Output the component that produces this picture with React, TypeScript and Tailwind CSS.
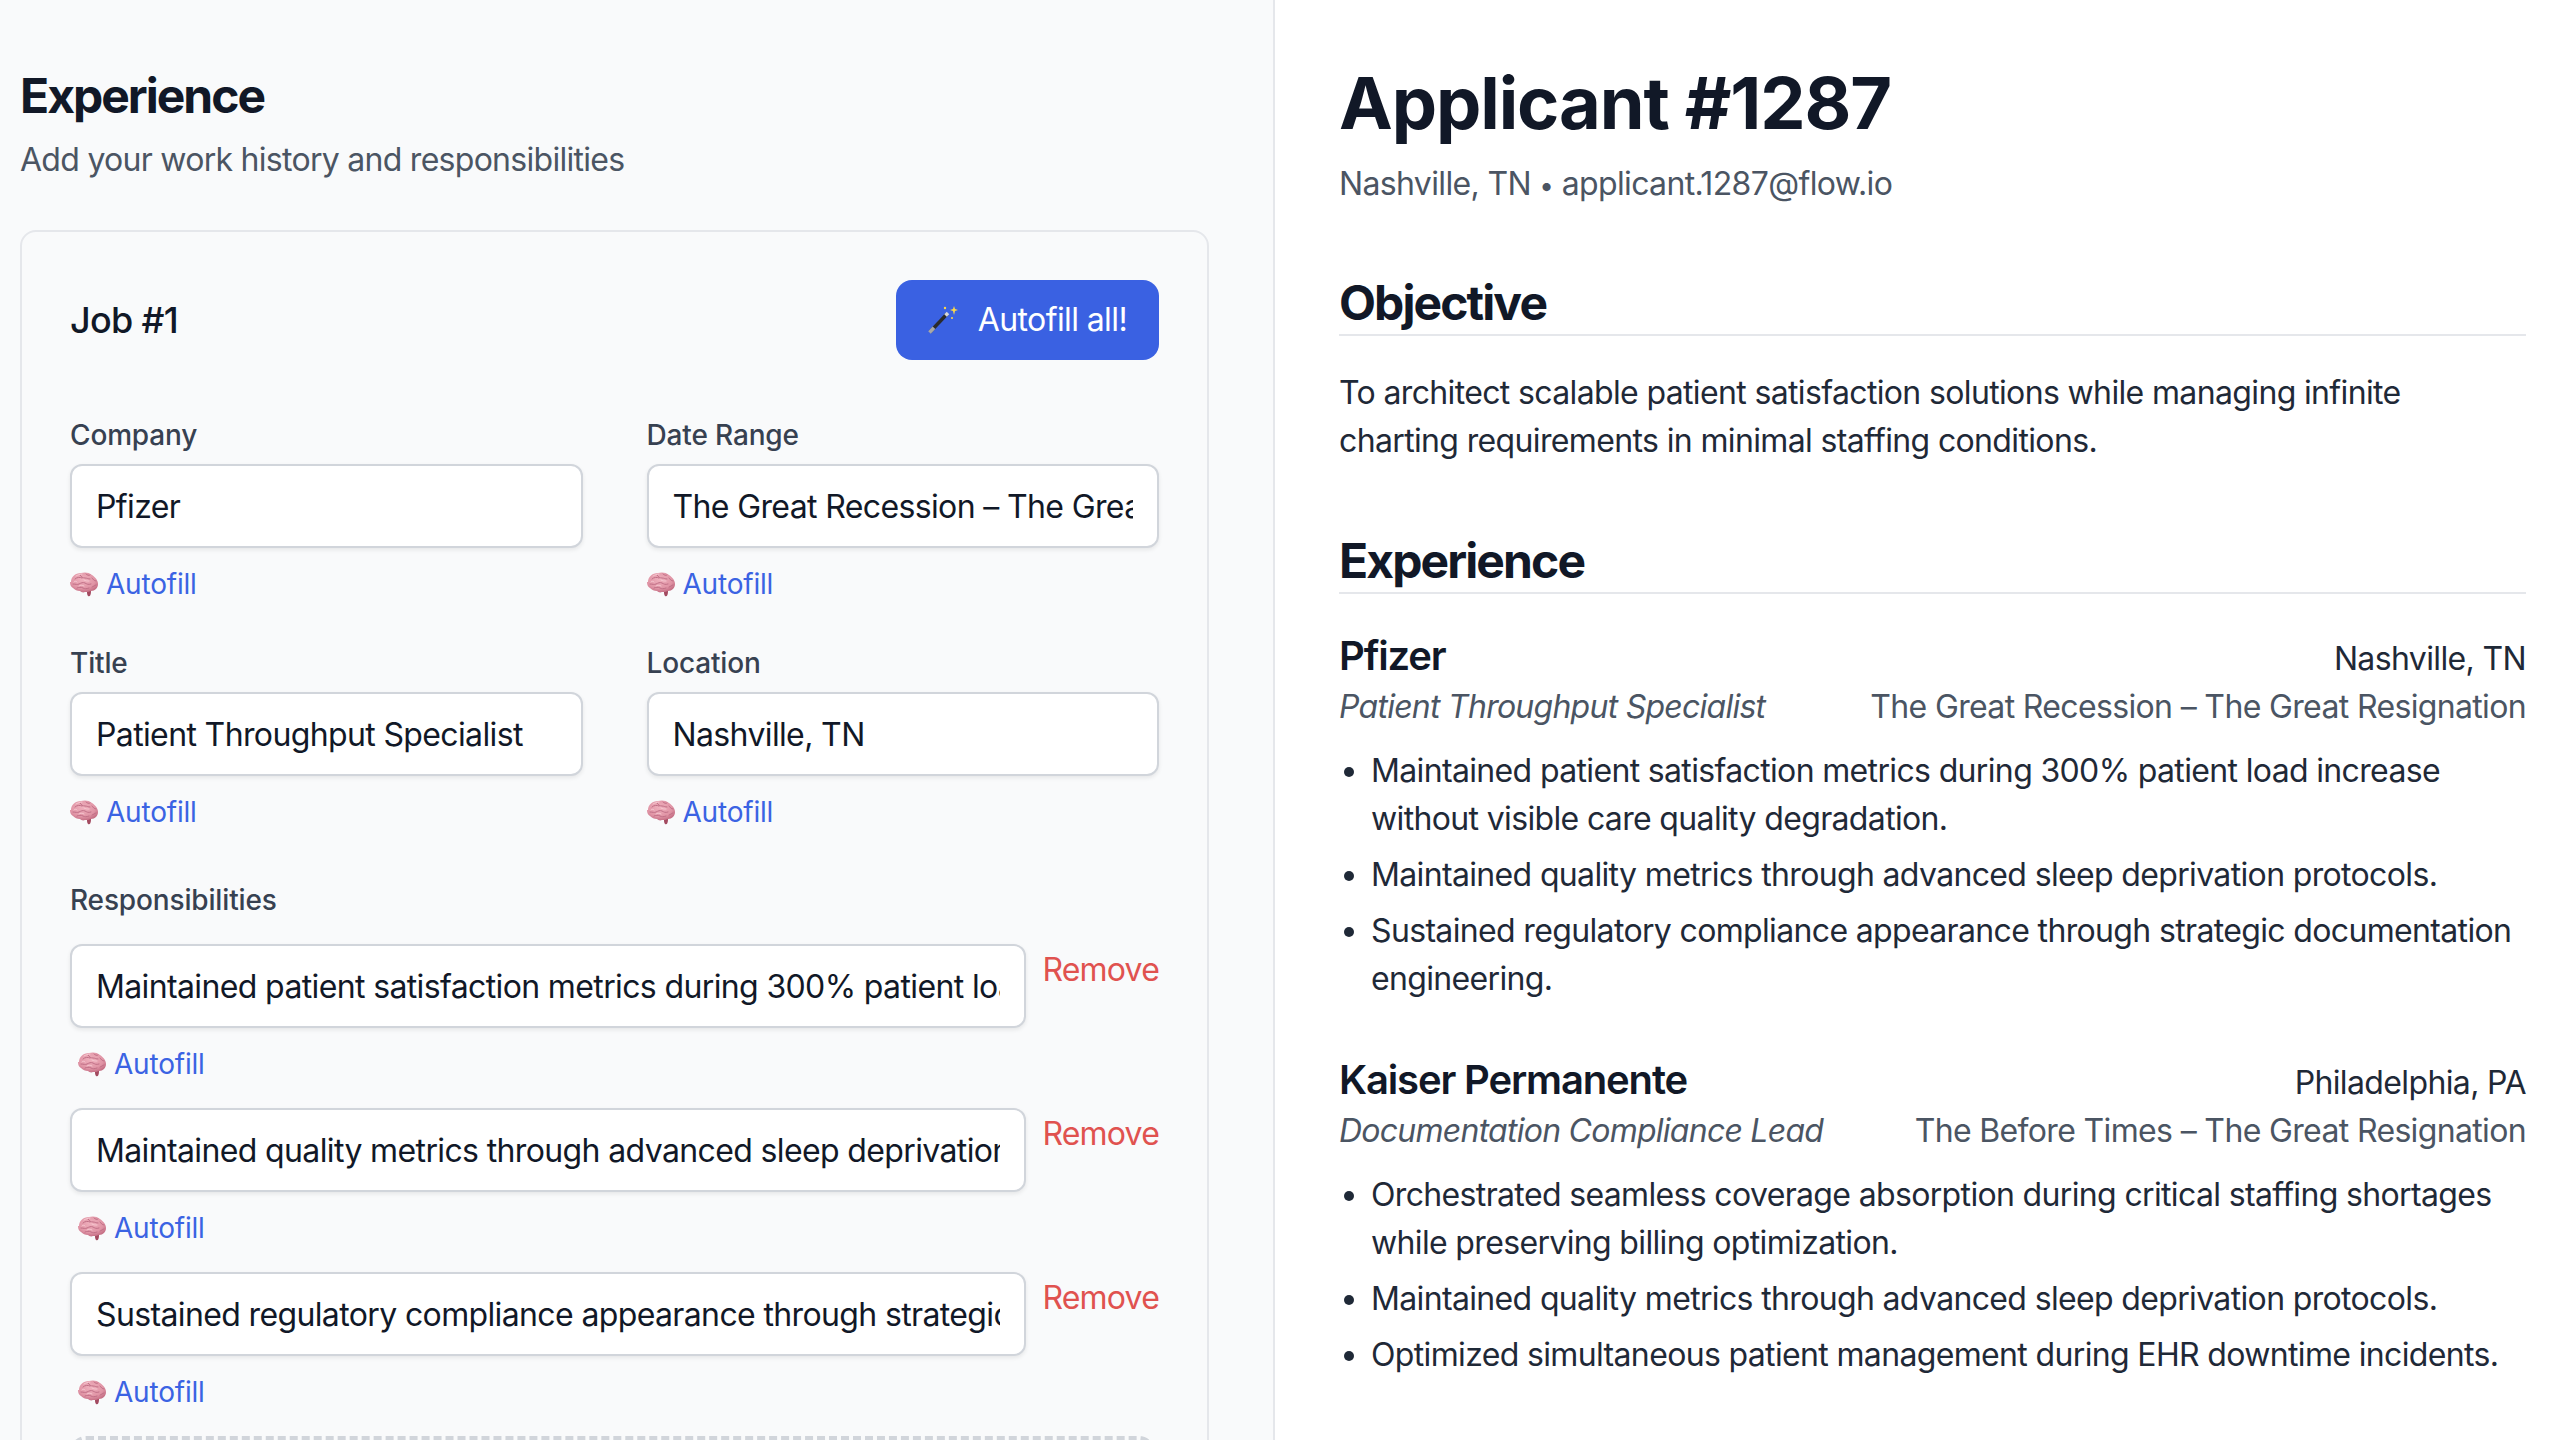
import React from "react";

function BrainIcon() {
  return (
    <svg width="28" height="25" viewBox="0 0 28 25" className="shrink-0">
      <defs>
        <radialGradient id="brainFill" cx="45%" cy="35%" r="70%">
          <stop offset="0%" stopColor="#efb0bd" />
          <stop offset="65%" stopColor="#e094a5" />
          <stop offset="100%" stopColor="#bf667d" />
        </radialGradient>
      </defs>
      <path d="M17 19c0 2 0 4 1 5 2 1 3-1 3-5Z" fill="#a34a60" />
      <path
        d="M1 10C1 5 5 1 11 1c3-1 8-1 11 2 3 2 6 5 6 9 0 4-3 7-7 7-2 1-4 1-6 1-2 1-4 0-5-1-3 0-5-1-7-3-2-1-3-3-3-6Z"
        fill="url(#brainFill)"
      />
      <path
        d="M5 7c2-2 5-2 7-1M10 3c1 2 3 3 5 3s3 1 5 1M16 2c1 1 3 2 4 1M3 12c3 0 4 1 6 0s4-2 6-1 3 2 6 1M7 16c2-1 4-1 6 0s3 1 6 0M22 6c1 1 2 3 4 3M22 15c1-1 3-1 4-2"
        fill="none"
        stroke="#c06f86"
        strokeWidth="1"
        strokeLinecap="round"
      />
      <path
        d="M6 4c2-1 4-2 6-2M4 10c1-1 2-1 3 0M14 8c2 1 3 1 5 1M9 14c2-1 3-1 5 0"
        fill="none"
        stroke="#f6ccd4"
        strokeWidth="0.9"
        strokeLinecap="round"
      />
    </svg>
  );
}

function WandIcon() {
  return (
    <svg width="30" height="30" viewBox="0 0 30 30" className="shrink-0">
      <path d="M2 27 19 9" stroke="#2b2b2b" strokeWidth="3.4" />
      <path d="M1.5 27.5 6 22.7" stroke="#a8a8a8" strokeWidth="3.6" />
      <path d="M17.5 10.5 20 8" stroke="#d8d8d8" strokeWidth="3.6" />
      <path d="M26 1l1 3 3 1-3 1-1 4-1-4-3-1 3-1Z" fill="#fbd84a" />
      <circle cx="17" cy="3" r="1.2" fill="#fbd84a" />
      <circle cx="24" cy="13" r="1" fill="#fbd84a" />
    </svg>
  );
}

function AutofillLink({ className = "" }: { className?: string }) {
  return (
    <div
      className={`flex items-center gap-2 mt-4 h-10 text-[28px] tracking-[-0.2px] text-[#3b63e3] ${className}`}
    >
      <BrainIcon />
      <span>Autofill</span>
    </div>
  );
}

const inputClass =
  "block w-full h-[84px] px-6 bg-white border-2 border-[#d1d5db] rounded-xl shadow-[0_2px_4px_rgba(0,0,0,0.08)] text-[32px] tracking-[-0.63px] text-[#111827] outline-none";

const labelClass =
  "block text-[28px] leading-[38px] tracking-[-0.15px] font-medium text-[#374151]";

function Field({ label, value }: { label: string; value: string }) {
  return (
    <div>
      <label className={`${labelClass} mb-[10px]`}>{label}</label>
      <input readOnly value={value} className={inputClass} />
      <AutofillLink />
    </div>
  );
}

function Responsibility({ value }: { value: string }) {
  return (
    <div>
      <div className="flex items-start gap-4">
        <input readOnly value={value} className={`${inputClass} flex-1 min-w-0`} />
        <button className="mt-[2px] text-[32px] leading-12 tracking-[-0.8px] text-[#e0524f]">
          Remove
        </button>
      </div>
      <AutofillLink className="pl-2" />
    </div>
  );
}

function SectionHeading({ children }: { children: React.ReactNode }) {
  return (
    <h2 className="h-[65px] text-[48px] leading-16 tracking-[-1.9px] font-bold text-[#111827] border-b-2 border-[#e5e7eb]">
      {children}
    </h2>
  );
}

type Job = {
  company: string;
  location: string;
  title: string;
  dates: string;
  bullets: string[];
};

const jobs: Job[] = [
  {
    company: "Pfizer",
    location: "Nashville, TN",
    title: "Patient Throughput Specialist",
    dates: "The Great Recession – The Great Resignation",
    bullets: [
      "Maintained patient satisfaction metrics during 300% patient load increase without visible care quality degradation.",
      "Maintained quality metrics through advanced sleep deprivation protocols.",
      "Sustained regulatory compliance appearance through strategic documentation engineering.",
    ],
  },
  {
    company: "Kaiser Permanente",
    location: "Philadelphia, PA",
    title: "Documentation Compliance Lead",
    dates: "The Before Times – The Great Resignation",
    bullets: [
      "Orchestrated seamless coverage absorption during critical staffing shortages while preserving billing optimization.",
      "Maintained quality metrics through advanced sleep deprivation protocols.",
      "Optimized simultaneous patient management during EHR downtime incidents.",
    ],
  },
];

function JobEntry({ job }: { job: Job }) {
  return (
    <div className="mb-12">
      <div className="flex justify-between items-baseline h-14">
        <h3 className="text-[40px] leading-[58px] tracking-[-1.15px] font-semibold text-[#111827]">
          {job.company}
        </h3>
        <span className="text-[32px] tracking-[-0.63px] text-[#1f2937]">
          {job.location}
        </span>
      </div>
      <div className="flex justify-between text-[32px] leading-12 tracking-[-0.65px] text-[#4b5563]">
        <span className="italic tracking-[-0.75px]">{job.title}</span>
        <span>{job.dates}</span>
      </div>
      <ul className="mt-4 pl-8 list-disc flex flex-col gap-2 text-[32px] leading-12 tracking-[-0.65px] text-[#1f2937]">
        {job.bullets.map((b, i) => (
          <li key={i}>{b}</li>
        ))}
      </ul>
    </div>
  );
}

export default function App() {
  return (
    <div className="flex h-[1440px] overflow-hidden bg-white font-[Inter,sans-serif]">
      <div className="w-[1275px] shrink-0 pl-5 pr-[64px] pt-16 bg-[#f9fafb] border-r-2 border-[#e5e7eb]">
        <h1 className="text-[48px] leading-16 tracking-[-2px] font-bold text-[#111827]">
          Experience
        </h1>
        <p className="mt-2 text-[32px] leading-12 tracking-[-0.72px] text-[#4b5563]">
          Add your work history and responsibilities
        </p>

        <div className="mt-[46px] p-12 border-2 border-[#e5e7eb] rounded-2xl">
          <div className="flex items-center justify-between h-20 mb-14">
            <h3 className="text-[36px] tracking-[-0.7px] font-medium text-[#111827]">
              Job #1
            </h3>
            <button className="flex items-center gap-5 h-20 px-8 rounded-2xl bg-[#3a61e2] text-[32px] tracking-[-0.6px] text-white">
              <WandIcon />
              Autofill all!
            </button>
          </div>

          <div className="grid grid-cols-2 gap-x-16 gap-y-10">
            <Field label="Company" value="Pfizer" />
            <Field
              label="Date Range"
              value="The Great Recession – The Great Resignation"
            />
            <Field label="Title" value="Patient Throughput Specialist" />
            <Field label="Location" value="Nashville, TN" />
          </div>

          <div className="mt-[49px]">
            <label className={`${labelClass} mb-[25px]`}>Responsibilities</label>
            <div className="flex flex-col gap-6">
              <Responsibility value="Maintained patient satisfaction metrics during 300% patient load increase without visible care quality degradation." />
              <Responsibility value="Maintained quality metrics through advanced sleep deprivation protocols." />
              <Responsibility value="Sustained regulatory compliance appearance through strategic documentation engineering." />
            </div>
            <div className="mt-6 mr-1 h-20 border-4 border-dashed border-[#d1d5db] rounded-2xl" />
          </div>
        </div>
      </div>

      <div className="w-[1251px] pl-[64px] pt-[63px] text-[#1f2937]">
        <h1 className="text-[72px] leading-20 tracking-[-1.1px] font-bold text-[#111827]">
          Applicant #1287
        </h1>
        <p className="mt-[17px] h-12 text-[32px] leading-12 tracking-[-0.64px] text-[#4b5563]">
          Nashville, TN <span className="text-[26px] leading-none">•</span> applicant.1287@flow.io
        </p>

        <div className="mt-[63px]">
          <SectionHeading>Objective</SectionHeading>
          <p className="mt-[33px] text-[32px] leading-12 tracking-[-0.64px]">
            To architect scalable patient satisfaction solutions while managing
            infinite charting requirements in minimal staffing conditions.
          </p>
        </div>

        <div className="mt-16">
          <SectionHeading>Experience</SectionHeading>
          <div className="mt-[33px]">
            {jobs.map((job) => (
              <JobEntry key={job.company} job={job} />
            ))}
          </div>
        </div>
      </div>
    </div>
  );
}
